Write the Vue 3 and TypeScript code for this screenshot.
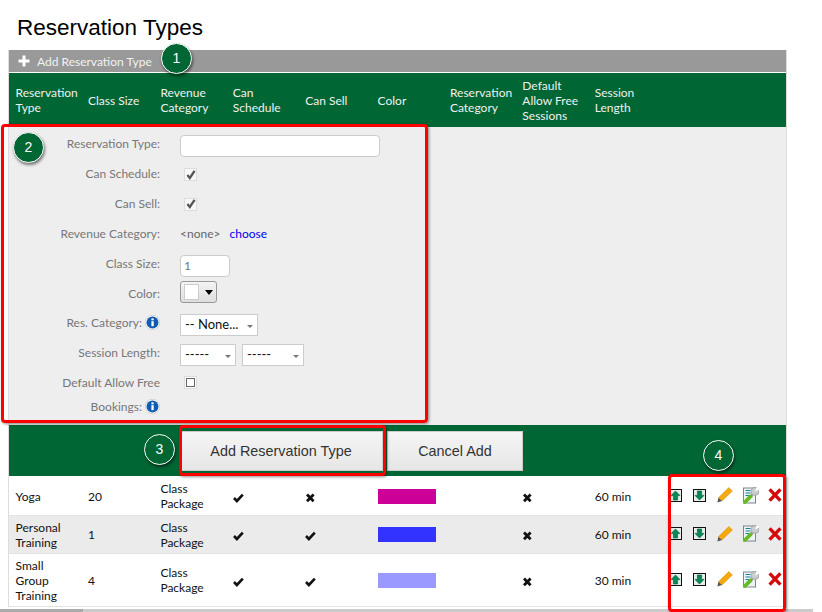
<script setup lang="ts">
interface Row { name: string[]; size: string; sched: boolean; sell: boolean; color: string; length: string; cls: string }
const columns: string[][] = [
  ['Reservation', 'Type'], ['Class Size'], ['Revenue', 'Category'], ['Can', 'Schedule'], ['Can Sell'], ['Color'],
  ['Reservation', 'Category'], ['Default', 'Allow Free', 'Sessions'], ['Session', 'Length']
]
const rows: Row[] = [
  { name: ['Yoga'], size: '20', sched: true, sell: false, color: '#cc0099', length: '60 min', cls: 'r1' },
  { name: ['Personal', 'Training'], size: '1', sched: true, sell: true, color: '#3333ff', length: '60 min', cls: 'r2' },
  { name: ['Small', 'Group', 'Training'], size: '4', sched: true, sell: true, color: '#9999ff', length: '30 min', cls: 'r3' }
]
</script>

<template>
  <div class="page">
    <h1 class="title">Reservation Types</h1>
    <div class="panel">
      <div class="addbar">
        <svg class="plus" width="12" height="12" viewBox="0 0 12 12"><path d="M4.5 0.5h3v4h4v3h-4v4h-3v-4h-4v-3h4z" fill="#fff" /></svg>
        <span>Add Reservation Type</span>
      </div>
      <div class="grid head">
        <div v-for="(c, i) in columns" :key="i" class="cell"><span v-for="l in c" :key="l">{{ l }}</span></div>
      </div>
      <div class="form">
        <div class="frow"><label>Reservation Type:</label><input class="text wide" type="text" /></div>
        <div class="frow"><label>Can Schedule:</label><span class="check on"><svg width="10" height="10" viewBox="0 0 10 10"><path d="M1.4 5 3.8 8 8.6 0.8" fill="none" stroke="#555" stroke-width="2.3" /></svg></span></div>
        <div class="frow"><label>Can Sell:</label><span class="check on"><svg width="10" height="10" viewBox="0 0 10 10"><path d="M1.4 5 3.8 8 8.6 0.8" fill="none" stroke="#555" stroke-width="2.3" /></svg></span></div>
        <div class="frow"><label>Revenue Category:</label><span class="none">&lt;none&gt;</span><a class="choose">choose</a></div>
        <div class="frow"><label>Class Size:</label><input class="text small" type="text" value="1" /></div>
        <div class="frow"><label>Color:</label><span class="picker"><i class="swatch"></i><i class="caret"></i></span></div>
        <div class="frow"><label>Res. Category: <svg class="info" width="15" height="15" viewBox="0 0 15 15"><circle cx="7.5" cy="7.5" r="7.2" fill="#fff" stroke="#bbb" stroke-width=".6" /><circle cx="7.5" cy="7.5" r="6" fill="#0f5cb0" /><rect x="6.4" y="6.2" width="2.3" height="5" fill="#fff" /><rect x="6.4" y="3.4" width="2.3" height="1.9" fill="#fff" /></svg></label><span class="sel s78">-- None...<i></i></span></div>
        <div class="frow"><label>Session Length:</label><span class="sel s56">-----<i></i></span><span class="sel s62">-----<i></i></span></div>
        <div class="frow"><label>Default Allow Free</label><span class="check off"></span></div>
        <div class="frow last"><label>Bookings: <svg class="info" width="15" height="15" viewBox="0 0 15 15"><circle cx="7.5" cy="7.5" r="7.2" fill="#fff" stroke="#bbb" stroke-width=".6" /><circle cx="7.5" cy="7.5" r="6" fill="#0f5cb0" /><rect x="6.4" y="6.2" width="2.3" height="5" fill="#fff" /><rect x="6.4" y="3.4" width="2.3" height="1.9" fill="#fff" /></svg></label></div>
      </div>
      <div class="actions">
        <button class="btn add">Add Reservation Type</button>
        <button class="btn cancel">Cancel Add</button>
      </div>
      <div v-for="r in rows" :key="r.cls" class="grid row" :class="r.cls">
        <div class="cell"><span v-for="l in r.name" :key="l">{{ l }}</span></div>
        <div class="cell">{{ r.size }}</div>
        <div class="cell"><span>Class</span><span>Package</span></div>
        <div class="cell"><svg class="mark" width="11" height="10" viewBox="0 0 11 10"><path d="M1 5 3.9 8 9.8 1.6" fill="none" stroke="#111" stroke-width="2.6" /></svg></div>
        <div class="cell">
          <svg v-if="r.sell" class="mark" width="11" height="10" viewBox="0 0 11 10"><path d="M1 5 3.9 8 9.8 1.6" fill="none" stroke="#111" stroke-width="2.6" /></svg>
          <svg v-else class="mark" width="11" height="10" viewBox="0 0 11 10"><path d="M2 1.6 8.6 8.2M8.6 1.6 2 8.2" fill="none" stroke="#111" stroke-width="2.8" /></svg>
        </div>
        <div class="cell"><i class="bar" :style="{ background: r.color }"></i></div>
        <div class="cell"></div>
        <div class="cell"><svg class="mark" width="11" height="10" viewBox="0 0 11 10"><path d="M2 1.6 8.6 8.2M8.6 1.6 2 8.2" fill="none" stroke="#111" stroke-width="2.8" /></svg></div>
        <div class="cell">{{ r.length }}</div>
        <div class="tools">
          <svg class="t-up" width="13" height="13" viewBox="0 0 13 13"><rect x=".5" y=".5" width="12" height="12" fill="#e8efe8" stroke="#111" /><path d="M6.5 2 11 6.6H8.6V11H4.4V6.6H2z" fill="#078a55" stroke="#04553a" stroke-width=".6" /></svg>
          <svg class="t-down" width="13" height="13" viewBox="0 0 13 13"><rect x=".5" y=".5" width="12" height="12" fill="#e8efe8" stroke="#111" /><path d="M6.5 11 11 6.4H8.6V2H4.4V6.4H2z" fill="#078a55" stroke="#04553a" stroke-width=".6" /></svg>
          <svg class="t-pen" width="16" height="16" viewBox="0 0 16 16"><path d="M11.8 0.6 15.4 4 5 14 1.4 10.8z" fill="#f5a90f" stroke="#d98c05" stroke-width=".5" /><path d="M1.4 10.8 5 14 0.4 15.6z" fill="#555" /></svg>
          <svg class="t-tool" width="16" height="17" viewBox="0 0 16 17"><rect x=".5" y="1" width="12" height="15" fill="#eef3f5" stroke="#7b868c" /><path d="M2.5 3.5h5M2.5 6h5M2.5 8.5h4" stroke="#15809f" stroke-width="1.2" /><path d="M7.5 9.5 10.5 6.5" stroke="#aaa" stroke-width="2.6" /><path d="M2 15 7.6 9.4" stroke="#66bb22" stroke-width="3.8" stroke-linecap="round" /><circle cx="12" cy="4.4" r="4" fill="#c9cdd0" stroke="#8c9296" stroke-width=".6" /><path d="M11.8 4.6 14 0 16.6 2.6z" fill="#fff" /></svg>
          <svg class="t-x" width="14" height="14" viewBox="0 0 14 14"><path d="M1.6 1.4 12.4 12.6M12.4 1.4 1.6 12.6" fill="none" stroke="#d40a0a" stroke-width="3.4" /></svg>
        </div>
      </div>
    </div>
    <div class="footer"><i></i></div>

    <div class="redbox box2"></div>
    <div class="redbox box3"></div>
    <div class="redbox box4"></div>
    <div class="badge b1">1</div>
    <div class="badge b2">2</div>
    <div class="badge b3">3</div>
    <div class="badge b4">4</div>
  </div>
</template>

<style scoped>
.page { position: relative; width: 822px; height: 612px; overflow: hidden; background: #fff; font-family: Lato, "Noto Sans", sans-serif; font-size: 12px; line-height: 15px; color: #111; }
.title { margin: 0; padding: 14px 0 0 17px; height: 36px; box-sizing: border-box; font: 400 22.5px/28px "Liberation Sans", Arial, sans-serif; color: #000; }
.panel { margin: 14px 0 0 8px; width: 779px; border-left: 1px solid #ddd; border-right: 1px solid #ddd; box-sizing: border-box; }
.addbar { height: 22px; background: #999; color: #f2f2f2; display: flex; align-items: center; padding-left: 9px; gap: 7px; margin-bottom: 1px; }
.plus { flex: none; }
.grid { display: grid; grid-template-columns: repeat(9, 72.4px) 1fr; padding-left: 6.6px; align-items: center; }
.cell { display: flex; flex-direction: column; align-items: flex-start; }
.head { height: 54px; box-sizing: border-box; background: #006633; color: #f0f0f0; }
.form { height: 298px; background: #eee; padding-top: 3px; box-sizing: border-box; color: #777; }
.frow { height: 29.7px; display: flex; align-items: center; }
.frow label { width: 151px; flex: none; text-align: right; margin-right: 20px; white-space: nowrap; display: flex; justify-content: flex-end; align-items: center; gap: 3px; }
.frow:nth-child(-n+3) label { margin-bottom: 2px; }
.frow.last { height: 18px; }
.text { background: #fff; border: 1px solid #ccc; border-radius: 4px; height: 22px; box-sizing: border-box; padding: 0 3px; font: inherit; color: #777; outline: none; }
.wide { width: 200px; margin-top: 2px; }
.small { width: 50px; margin-top: 4px; }
.check { box-sizing: border-box; display: flex; align-items: center; justify-content: center; }
.check.on { width: 13px; height: 13px; margin-left: 4px; background: #f7f7f7; border: 1px solid #ddd; }
.check.off { width: 9px; height: 9px; margin-left: 6px; background: #fff; border: 1px solid #666; outline: 1px solid #fff; box-shadow: 0 0 0 2px #ddd; }
.none { color: #666; margin-right: 9px; }
.choose { color: #0000ee; }
.picker { width: 37px; height: 22px; margin-bottom: 2px; box-sizing: border-box; border: 1px solid #999; border-radius: 3px; background: linear-gradient(#f4f4f4, #dedede); display: flex; align-items: center; padding-left: 3px; gap: 6px; }
.swatch { width: 13px; height: 14px; background: #fff; border: 1px solid #ccc; display: block; }
.caret { width: 0; height: 0; border: 4px solid transparent; border-top: 5px solid #000; border-bottom: 0; display: block; }
.sel { position: relative; height: 22px; margin-top: 4px; box-sizing: border-box; background: #fff; border: 1px solid #ccc; color: #111; padding-left: 4px; display: flex; align-items: center; font-size: 13px; }
.sel i { position: absolute; right: 4px; top: 10px; width: 0; height: 0; border: 3px solid transparent; border-top: 3px solid #777; border-bottom: 0; }
.s78 { width: 78px; }
.s56 { width: 56px; margin-right: 6px; }
.s62 { width: 62px; }
.actions { height: 51px; background: #006633; display: flex; align-items: flex-start; padding: 6px 0 0 172px; gap: 4px; box-sizing: border-box; }
.btn { height: 40px; border: 1px solid #ccc; background: linear-gradient(#f5f5f5, #e6e6e6); font: 14.4px "Liberation Sans", Arial, sans-serif; color: #333; padding: 0; }
.add { width: 202px; padding-right: 2px; }
.cancel { width: 136px; }
.row { position: relative; border-bottom: 1px solid #e4e4e4; box-sizing: border-box; }
.r1 { height: 40px; padding-top: 1px; background: #fff; }
.r2 { height: 38px; background: #ebebeb; }
.r3 { height: 53px; background: #fff; }
.bar { width: 58px; height: 15px; display: block; }
.mark { display: block; margin-top: 3px; }
.tools { display: flex; align-items: center; padding: 0 0 2px 1.4px; }
.tools svg { flex: none; }
.t-down { margin-left: 11px; }
.t-pen { margin-left: 11px; }
.t-tool { margin-left: 10px; }
.t-x { margin-left: 9px; }
.footer { height: 5px; margin-top: 2px; background: #ccc; width: 813px; }
.footer i { display: block; width: 83px; height: 5px; background: #aaa; }
.redbox { position: absolute; border: 3px solid #f00; border-radius: 4px; box-sizing: border-box; box-shadow: 1px 1px 3px rgba(0,0,0,.45); }
.box2 { left: 1px; top: 124px; width: 427px; height: 299px; }
.box3 { left: 179px; top: 425px; width: 207px; height: 51px; }
.box4 { left: 668px; top: 474px; width: 118px; height: 138px; }
.badge { position: absolute; width: 31px; height: 31px; box-sizing: border-box; border-radius: 50%; border: 1px solid #fff; background: #006633; color: #fff; font: 14px/29px "Liberation Sans", Arial, sans-serif; text-align: center; box-shadow: 1px 2px 3px rgba(0,0,0,.5); }
.b1 { left: 161px; top: 43px; }
.b2 { left: 13px; top: 132px; }
.b3 { left: 144px; top: 434px; }
.b4 { left: 703px; top: 440px; }
</style>
